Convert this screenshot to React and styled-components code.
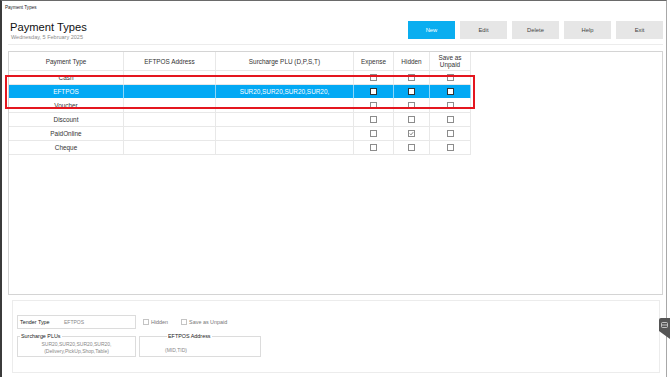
import React from "react";
import styled, { createGlobalStyle } from "styled-components";

const GlobalStyle = createGlobalStyle`
  html, body { margin: 0; padding: 0; background: #fff; }
  body { font-family: "Liberation Sans", Arial, sans-serif; }
`;

const Screen = styled.div`
  position: relative;
  width: 670px;
  height: 377px;
  overflow: hidden;
  background: #fff;
`;

const Window = styled.div`
  width: 667px;
  height: 377px;
  box-sizing: border-box;
  border-left: 2px solid #3b3b3b;
  border-top: 1px solid #6a6a6a;
  border-right: 1px solid #a8a8a8;
  display: flex;
  flex-direction: column;
`;

const TitleBar = styled.div`
  height: 12px;
  padding-left: 3px;
  display: flex;
  align-items: center;
  font-size: 4.6px;
  color: #222;
`;

const Content = styled.div`
  flex: 1;
  padding: 0 3px 0 6px;
  display: flex;
  flex-direction: column;
`;

const Header = styled.div`
  display: flex;
  justify-content: space-between;
  align-items: flex-start;
  padding: 8px 0 3px 2px;
  border-bottom: 1px solid #ececec;
`;

const TitleBlock = styled.div`
  display: flex;
  flex-direction: column;
`;

const Title = styled.div`
  font-size: 11.2px;
  line-height: 13px;
  color: #111;
`;

const DateText = styled.div`
  font-size: 5.5px;
  line-height: 7px;
  color: #8a8a8a;
  padding-left: 1px;
`;

const Toolbar = styled.div`
  display: flex;
  gap: 5px;
`;

const ToolButton = styled.div`
  width: 47px;
  height: 18px;
  display: flex;
  align-items: center;
  justify-content: center;
  font-size: 5.8px;
  background: ${p => (p.$primary ? "#0aaef0" : "#e6e6e6")};
  color: ${p => (p.$primary ? "#fff" : "#444")};
`;

const GridPanel = styled.div`
  margin-top: 6px;
  height: 244px;
  box-sizing: border-box;
  border: 1px solid #d4d4d4;
`;

const Row = styled.div`
  display: grid;
  grid-template-columns: 115px 92px 138px 40px 36px 41px;
  height: ${p => p.$h || 14}px;
`;

const Cell = styled.div`
  box-sizing: border-box;
  border-right: 1px solid ${p => (p.$sel ? "#8ed6f8" : "#e8e8e8")};
  border-bottom: 1px solid ${p => (p.$sel ? "#fff" : "#e8e8e8")};
  background: ${p => (p.$sel ? "#03a9f4" : "transparent")};
  display: flex;
  align-items: center;
  justify-content: center;
  text-align: center;
  font-size: 6.4px;
  line-height: 7px;
  color: ${p => (p.$sel ? "#fff" : "#333")};
`;

const Box = styled.span`
  width: 5px;
  height: 5px;
  border: 1px solid ${p => (p.$sel ? "#333" : "#8c8c8c")};
  background: #fff;
  display: flex;
  align-items: center;
  justify-content: center;
`;

const BottomPanel = styled.div`
  margin: 5px 0 0 4px;
  width: 648px;
  height: 73px;
  box-sizing: border-box;
  border: 1px solid #ececec;
  padding: 14px 0 0 4px;
  display: flex;
  flex-direction: column;
`;

const FormRow = styled.div`
  display: flex;
  align-items: center;
  gap: ${p => p.$gap || 0}px;
  margin-top: ${p => p.$top || 0}px;
`;

const TenderBox = styled.div`
  width: 119px;
  height: 14px;
  box-sizing: border-box;
  border: 1px solid #dcdcdc;
  display: flex;
  align-items: center;
  padding-left: 2px;
`;

const FieldLabel = styled.span`
  width: 44px;
  font-size: 5.4px;
  color: #222;
`;

const FieldValue = styled.span`
  font-size: 5px;
  color: #888;
`;

const CheckItem = styled.div`
  display: flex;
  align-items: center;
  gap: 2px;
  margin-left: ${p => p.$ml}px;
  font-size: 5.4px;
  color: #777;
`;

const SmallBox = styled.span`
  width: 4px;
  height: 4px;
  border: 1px solid #c4c4c4;
`;

const Group = styled.fieldset`
  margin: 0;
  padding: 0 0 0 ${p => p.$pl || 0}px;
  min-inline-size: 0;
  width: ${p => p.$w}px;
  height: 23px;
  box-sizing: border-box;
  border: 1px solid #dcdcdc;
  display: flex;
  flex-direction: column;
  justify-content: center;
  align-items: ${p => (p.$center ? "center" : "flex-start")};
`;

const Legend = styled.legend`
  padding: 0 1px;
  margin-left: 2px;
  font-size: 5.4px;
  line-height: 5px;
  color: #222;
`;

const GroupText = styled.div`
  font-size: 5px;
  line-height: 7px;
  color: #888;
  margin-top: ${p => p.$mt || 0}px;
`;

const Highlight = styled.div`
  position: absolute;
  left: 5px;
  top: 74.5px;
  width: 470px;
  height: 34.5px;
  box-sizing: border-box;
  border: 2.5px solid #e4161f;
  pointer-events: none;
`;

const SideTab = styled.div`
  position: absolute;
  left: 659px;
  top: 318px;
  width: 11px;
  height: 21px;
  background: #555;
  border-top-left-radius: 2px;
  clip-path: polygon(0 0, 100% 0, 100% 100%, 0 62%);
  display: flex;
  justify-content: center;
  padding-top: 4px;
  box-sizing: border-box;
`;

const rows = [
  { name: "Cash", plu: "" },
  { name: "EFTPOS", plu: "SUR20,SUR20,SUR20,SUR20,", sel: true },
  { name: "Voucher", plu: "" },
  { name: "Discount", plu: "" },
  { name: "PaidOnline", plu: "", hidden: true },
  { name: "Cheque", plu: "" },
];

const Check = ({ sel, checked }) => (
  <Box $sel={sel}>
    {checked && (
      <svg width="5" height="5" viewBox="0 0 5 5">
        <path d="M0.8 2.6 L2 3.8 L4.2 1.2" fill="none" stroke="#666" strokeWidth="0.8" />
      </svg>
    )}
  </Box>
);

export default function App() {
  return (
    <Screen>
      <GlobalStyle />
      <Window>
        <TitleBar>Payment Types</TitleBar>
        <Content>
          <Header>
            <TitleBlock>
              <Title>Payment Types</Title>
              <DateText>Wednesday, 5 February 2025</DateText>
            </TitleBlock>
            <Toolbar>
              <ToolButton $primary>New</ToolButton>
              <ToolButton>Edit</ToolButton>
              <ToolButton>Delete</ToolButton>
              <ToolButton>Help</ToolButton>
              <ToolButton>Exit</ToolButton>
            </Toolbar>
          </Header>

          <GridPanel>
            <Row $h={19}>
              <Cell>Payment Type</Cell>
              <Cell>EFTPOS Address</Cell>
              <Cell>Surcharge PLU (D,P,S,T)</Cell>
              <Cell>Expense</Cell>
              <Cell>Hidden</Cell>
              <Cell>Save as<br />Unpaid</Cell>
            </Row>
            {rows.map(r => (
              <Row key={r.name}>
                <Cell $sel={r.sel}>{r.name}</Cell>
                <Cell $sel={r.sel}></Cell>
                <Cell $sel={r.sel}>{r.plu}</Cell>
                <Cell $sel={r.sel}><Check sel={r.sel} /></Cell>
                <Cell $sel={r.sel}><Check sel={r.sel} checked={r.hidden} /></Cell>
                <Cell $sel={r.sel}><Check sel={r.sel} /></Cell>
              </Row>
            ))}
          </GridPanel>

          <BottomPanel>
            <FormRow>
              <TenderBox>
                <FieldLabel>Tender Type</FieldLabel>
                <FieldValue>EFTPOS</FieldValue>
              </TenderBox>
              <CheckItem $ml={7}><SmallBox />Hidden</CheckItem>
              <CheckItem $ml={13}><SmallBox />Save as Unpaid</CheckItem>
            </FormRow>
            <FormRow $top={5} $gap={3}>
              <Group $w={119} $center>
                <Legend>Surcharge PLUs</Legend>
                <GroupText>SUR20,SUR20,SUR20,SUR20,</GroupText>
                <GroupText>(Delivery,PickUp,Shop,Table)</GroupText>
              </Group>
              <Group $w={122} $pl={25}>
                <Legend>EFTPOS Address</Legend>
                <GroupText $mt={6}>(MID,TID)</GroupText>
              </Group>
            </FormRow>
          </BottomPanel>
        </Content>
      </Window>
      <Highlight />
      <SideTab>
        <svg width="7" height="6" viewBox="0 0 7 6">
          <rect x="0.5" y="0.5" width="6" height="5" rx="1" fill="none" stroke="#ddd" strokeWidth="0.8" />
          <line x1="1" y1="3" x2="6" y2="3" stroke="#ddd" strokeWidth="0.8" />
        </svg>
      </SideTab>
    </Screen>
  );
}
